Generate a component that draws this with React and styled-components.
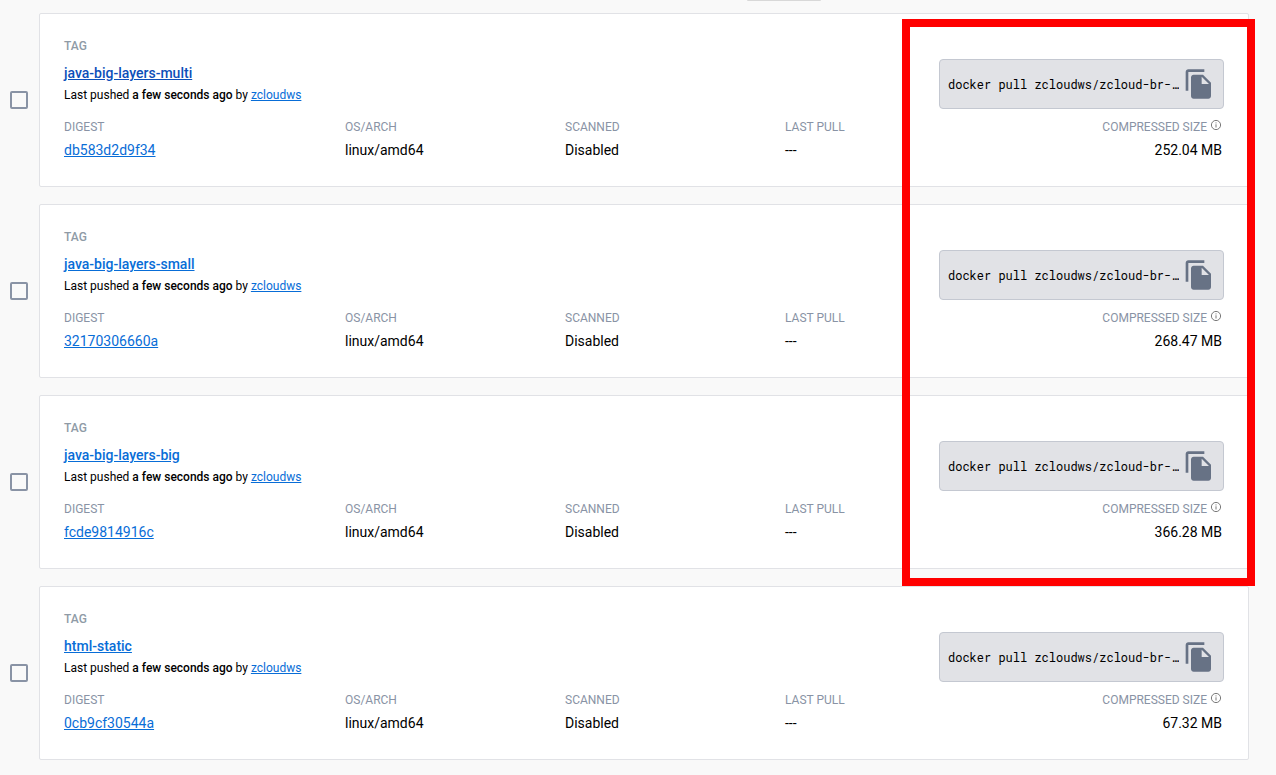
import React from "react";
import styled, { createGlobalStyle } from "styled-components";

const Global = createGlobalStyle`
  *, *::before, *::after { box-sizing: border-box; }
  body {
    margin: 0;
    background: #f9f9f9;
    color: #000;
    font-family: Roboto, "Liberation Sans", sans-serif;
    font-size: 14px;
    line-height: 20px;
  }
`;

const Page = styled.main`
  padding: 0 27px 14px 10px;
`;

const Toolbar = styled.div`
  height: 13px;
  display: flex;
  justify-content: flex-end;
  padding-right: 428px;
`;

const MenuEdge = styled.div`
  width: 74px;
  height: 1px;
  border-radius: 0 0 1px 1px;
  background: #d8d8d8;
`;

const TagList = styled.div`
  display: flex;
  flex-direction: column;
  gap: 17px;
`;

const Highlighted = styled(TagList)`
  position: relative;
`;

const Marker = styled.div`
  position: absolute;
  top: 6px;
  right: -6px;
  bottom: -17px;
  width: 353px;
  border: 8px solid #f00;
  pointer-events: none;
`;

const Row = styled.div`
  display: flex;
  align-items: center;
  gap: 11px;
`;

const Tick = styled.input`
  appearance: none;
  flex: none;
  width: 18px;
  height: 18px;
  margin: 0;
  border: 2px solid #8993a5;
  border-radius: 2px;
  background: transparent;
  &:checked { background: #8993a5; }
`;

const Card = styled.article`
  flex: 1;
  min-width: 0;
  padding: 24px;
  background: #fff;
  border: 1px solid #e1e2e6;
  border-radius: 2px;
`;

const CardTop = styled.div`
  display: flex;
  justify-content: space-between;
  gap: 24px;
`;

const Overline = styled.div`
  margin-bottom: 7px;
  font-size: 12px;
  line-height: 16px;
  font-weight: 500;
  color: #8f9ba6;
`;

const Link = styled.a`
  color: ${(p) => (p.$active ? "#0c4fb9" : "#086dd7")};
  font-weight: ${(p) => (p.$strong ? 500 : 400)};
  text-decoration: underline;
`;

const TagName = styled.div`
  line-height: 24px;
`;

const Pushed = styled.div`
  font-size: 12px;
  line-height: 20px;
  b { font-weight: 500; }
`;

const PullBox = styled.div`
  display: flex;
  align-items: center;
  gap: 4px;
  width: 285px;
  height: 50px;
  margin-top: 21px;
  padding: 0 8px;
  background: #e1e2e6;
  border: 1px solid #c4c8d1;
  border-radius: 4px;
`;

const Command = styled.code`
  flex: 1;
  white-space: nowrap;
  overflow: hidden;
  font-family: "Roboto Mono", "DejaVu Sans Mono", monospace;
  font-size: 12px;
  line-height: 16px;
`;

const CopyButton = styled.button`
  display: flex;
  flex: none;
  margin: 0;
  padding: 0;
  border: 0;
  background: none;
  color: #677285;
  cursor: pointer;
`;

const Details = styled.dl`
  display: grid;
  grid-template-columns: 281fr 220fr 220fr 220fr 219fr;
  margin: 8px 0 0;
`;

const Detail = styled.div`
  text-align: ${(p) => (p.$end ? "right" : "left")};
  padding-right: ${(p) => (p.$end ? 2 : 0)}px;
`;

const Label = styled.dt`
  display: flex;
  justify-content: ${(p) => (p.$end ? "flex-end" : "flex-start")};
  gap: 3px;
  font-size: 12px;
  line-height: 20px;
  color: #8993a5;
  svg { margin-top: 2px; }
`;

const Value = styled.dd`
  margin: 0;
  padding-top: 1px;
  line-height: 24px;
`;

const CopyIcon = () => (
  <svg width="32" height="32" viewBox="0 0 24 24" fill="currentColor" aria-hidden="true">
    <path d="M16 1H4c-1.100 0-2 .9-2 2v14h2V3h12V1zm-1 4l6 6v10c0 1.100-.9 2-2 2H7.990C6.890 23 6 22.100 6 21V7c0-1.100.89-2 1.990-2h7zm-1 7h5.500L14 6.500V12z" />
  </svg>
);

const InfoIcon = () => (
  <svg width="12" height="12" viewBox="0 0 12 12" fill="none" stroke="#6b6b6b" aria-hidden="true">
    <circle cx="6" cy="6" r="4.600" strokeWidth="0.900" />
    <path d="M6 5.300v3.200M6 3.400v1" strokeWidth="0.900" />
  </svg>
);

const tags = [
  { name: "java-big-layers-multi", digest: "db583d2d9f34", size: "252.04 MB", active: true },
  { name: "java-big-layers-small", digest: "32170306660a", size: "268.47 MB" },
  { name: "java-big-layers-big", digest: "fcde9814916c", size: "366.28 MB" },
  { name: "html-static", digest: "0cb9cf30544a", size: "67.32 MB" },
];

function TagRow({ tag }) {
  return (
    <Row>
      <Tick type="checkbox" aria-label={`Select ${tag.name}`} />
      <Card>
        <CardTop>
          <div>
            <Overline>TAG</Overline>
            <TagName>
              <Link href="#" $strong $active={tag.active}>{tag.name}</Link>
            </TagName>
            <Pushed>
              Last pushed <b>a few seconds ago</b> by <Link href="#">zcloudws</Link>
            </Pushed>
          </div>
          <PullBox>
            <Command>docker pull zcloudws/zcloud-br-…</Command>
            <CopyButton type="button" aria-label="Copy pull command">
              <CopyIcon />
            </CopyButton>
          </PullBox>
        </CardTop>
        <Details>
          <Detail>
            <Label>DIGEST</Label>
            <Value><Link href="#">{tag.digest}</Link></Value>
          </Detail>
          <Detail>
            <Label>OS/ARCH</Label>
            <Value>linux/amd64</Value>
          </Detail>
          <Detail>
            <Label>SCANNED</Label>
            <Value>Disabled</Value>
          </Detail>
          <Detail>
            <Label>LAST PULL</Label>
            <Value>---</Value>
          </Detail>
          <Detail $end>
            <Label $end>COMPRESSED SIZE<InfoIcon /></Label>
            <Value>{tag.size}</Value>
          </Detail>
        </Details>
      </Card>
    </Row>
  );
}

export default function App() {
  return (
    <>
      <Global />
      <Page>
        <Toolbar><MenuEdge /></Toolbar>
        <TagList>
          <Highlighted>
            {tags.slice(0, 3).map((t) => <TagRow key={t.name} tag={t} />)}
            <Marker />
          </Highlighted>
          <TagRow tag={tags[3]} />
        </TagList>
      </Page>
    </>
  );
}
